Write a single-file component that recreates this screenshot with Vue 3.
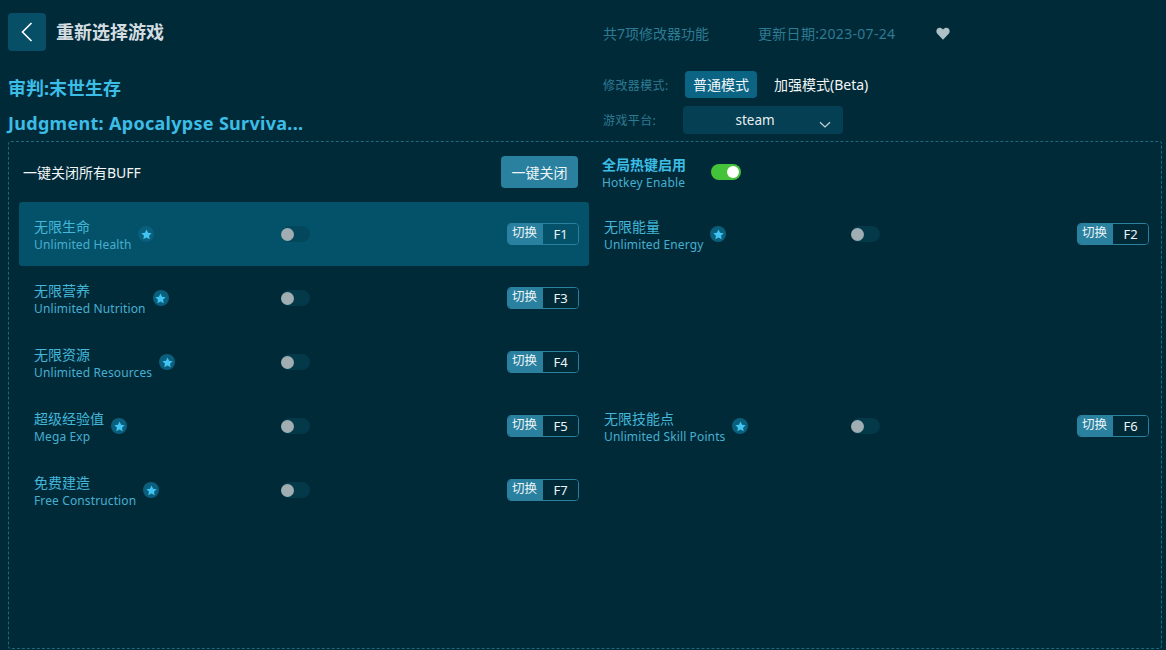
<script setup>
const cheats = [
  { zh: '无限生命', en: 'Unlimited Health', key: 'F1', active: true },
  { zh: '无限能量', en: 'Unlimited Energy', key: 'F2' },
  { zh: '无限营养', en: 'Unlimited Nutrition', key: 'F3' },
  null,
  { zh: '无限资源', en: 'Unlimited Resources', key: 'F4' },
  null,
  { zh: '超级经验值', en: 'Mega Exp', key: 'F5' },
  { zh: '无限技能点', en: 'Unlimited Skill Points', key: 'F6' },
  { zh: '免费建造', en: 'Free Construction', key: 'F7' },
]
</script>

<template>
  <div class="page">
    <header class="head">
      <div class="head-left">
        <div class="back-row">
          <button class="back">
            <svg width="12" height="20" viewBox="0 0 12 20" fill="none">
              <path d="M10.5 1 1.500 10l9 9" stroke="#fff" stroke-width="1.6" />
            </svg>
          </button>
          <span class="back-title">重新选择游戏</span>
        </div>
        <div class="game-zh">审判:末世生存</div>
        <div class="game-en">Judgment: Apocalypse Surviva...</div>
      </div>
      <div class="head-right">
        <div class="info-row">
          <span class="count">共7项修改器功能</span>
          <span class="date">更新日期:2023-07-24</span>
          <svg class="heart" width="14" height="13" viewBox="0 0 24 22">
            <path fill="#aebfc6" d="M12 21.500 2.600 11.800C-.2 8.900.1 4.900 2.500 2.600 5 .3 9 .6 12 4c3-3.400 7-3.700 9.500-1.400 2.400 2.300 2.700 6.300-.1 9.200z" />
          </svg>
        </div>
        <div class="mode-row">
          <span class="label">修改器模式:</span>
          <span class="mode on">普通模式</span>
          <span class="mode beta">加强模式(Beta)</span>
        </div>
        <div class="platform-row">
          <span class="label">游戏平台:</span>
          <div class="select">
            <span>steam</span>
            <svg class="caret" width="12" height="7" viewBox="0 0 12 7" fill="none">
              <path d="M1 1.200 6 6l5-4.800" stroke="#c4d4da" stroke-width="1.200" />
            </svg>
          </div>
        </div>
      </div>
    </header>

    <section class="panel">
      <div class="panel-top">
        <div class="close-all">
          <span>一键关闭所有BUFF</span>
          <button class="close-btn">一键关闭</button>
        </div>
        <div class="hotkey">
          <div class="hotkey-text">
            <div class="hotkey-zh">全局热键启用</div>
            <div class="hotkey-en">Hotkey Enable</div>
          </div>
          <span class="switch"><i></i></span>
        </div>
      </div>
      <div class="grid">
        <template v-for="(c, i) in cheats" :key="i">
          <div v-if="c" class="item" :class="{ active: c.active }">
            <div class="name">
              <div class="names">
                <div class="zh">{{ c.zh }}</div>
                <div class="en">{{ c.en }}</div>
              </div>
              <span class="star">
                <svg width="11" height="11" viewBox="0 0 24 24">
                  <path fill="#42c4f2" d="m12 1 3.400 7.200 7.800 1-5.700 5.400 1.500 7.800-7-3.800-7 3.800 1.500-7.800L.8 9.200l7.800-1z" />
                </svg>
              </span>
            </div>
            <span class="toggle"><i></i></span>
            <div class="keybind">
              <span class="tag">切换</span>
              <span class="key">{{ c.key }}</span>
            </div>
          </div>
          <div v-else></div>
        </template>
      </div>
    </section>
  </div>
</template>

<style>
html, body {
  margin: 0;
  background: #012a38;
}
</style>

<style scoped>
.page {
  height: 650px;
  box-sizing: border-box;
  padding: 0 4px 1px 8px;
  display: flex;
  flex-direction: column;
  overflow: hidden;
  background: #012a38;
  font-family: "Noto Sans", "Noto Sans CJK SC", sans-serif;
}

.head {
  height: 141px;
  display: flex;
  flex: none;
}

.head-left {
  width: 595px;
  padding-top: 13px;
}

.back-row {
  display: flex;
  align-items: center;
  height: 38px;
  gap: 10px;
}

.back {
  width: 38px;
  height: 38px;
  padding: 0;
  border: 0;
  border-radius: 4px;
  background: #064f67;
  display: flex;
  align-items: center;
  justify-content: center;
}

.back-title {
  font-size: 18px;
  font-weight: 700;
  color: #d3dde0;
  line-height: 38px;
}

.game-zh,
.game-en {
  font-size: 18px;
  font-weight: 700;
  color: #3cbde6;
  line-height: 24px;
}

.game-zh {
  margin-top: 25px;
}

.game-en {
  margin-top: 11px;
  letter-spacing: .3px;
}

.head-right {
  flex: 1;
}

.info-row {
  display: flex;
  align-items: center;
  height: 20px;
  margin-top: 23px;
  font-size: 14px;
  color: #2d7a93;
}

.count {
  width: 155px;
}

.date {
  width: 178px;
  letter-spacing: .3px;
}

.mode-row,
.platform-row {
  display: flex;
  align-items: center;
}

.mode-row {
  margin-top: 28px;
  height: 27px;
}

.platform-row {
  margin-top: 8px;
  height: 28px;
}

.label {
  width: 82px;
  flex: none;
  font-size: 12px;
  letter-spacing: .4px;
  color: #2d7a93;
}

.platform-row .label {
  width: 80px;
}

.mode {
  padding: 0 8px;
  height: 27px;
  line-height: 27px;
  border-radius: 4px;
  font-size: 14px;
  color: #f1f6f7;
}

.mode.on {
  background: #0b6484;
}

.mode.beta {
  margin-left: 9px;
}

.select {
  position: relative;
  width: 160px;
  height: 28px;
  border-radius: 4px;
  background: #053f53;
  color: #e8eff1;
  font-size: 13.500px;
  line-height: 28px;
  text-align: center;
  box-sizing: border-box;
  padding-right: 16px;
}

.caret {
  position: absolute;
  right: 12px;
  top: 15px;
}

.panel {
  flex: 1;
  border: 1px dashed #1d6a7d;
  border-radius: 3px;
  padding: 0 1px 0 10px;
}

.panel-top {
  height: 60px;
  display: grid;
  grid-template-columns: 570px 1fr;
}

.close-all {
  display: flex;
  align-items: center;
  justify-content: space-between;
  padding: 0 11px 0 4px;
  height: 32px;
  margin-top: 14px;
  font-size: 14px;
  color: #f2f6f7;
}

.close-btn {
  width: 77px;
  height: 32px;
  padding: 0;
  border: 0;
  border-radius: 4px;
  background: #29809f;
  color: #eef5f7;
  font: inherit;
}

.hotkey {
  display: flex;
  align-items: center;
  margin-top: 14px;
  height: 36px;
  padding-left: 13px;
}

.hotkey-text {
  width: 109px;
}

.hotkey-zh {
  font-size: 14px;
  font-weight: 700;
  color: #3cbde6;
  line-height: 18px;
}

.hotkey-en {
  font-size: 12px;
  letter-spacing: .2px;
  color: #46afd0;
  line-height: 18px;
}

.switch {
  position: relative;
  width: 30px;
  height: 16px;
  border-radius: 8px;
  background: #44c23a;
  margin-bottom: 4px;
}

.switch i {
  position: absolute;
  right: 2px;
  top: 2px;
  width: 12px;
  height: 12px;
  border-radius: 50%;
  background: #fff;
}

.grid {
  display: grid;
  grid-template-columns: 570px 570px;
  grid-auto-rows: 64px;
}

.item {
  display: flex;
  align-items: center;
  padding: 0 10px 0 15px;
  border-radius: 3px;
}

.item.active {
  background: #045269;
}

.name {
  width: 247px;
  flex: none;
  display: flex;
  align-items: center;
  gap: 7px;
}

.names {
  padding-top: 3px;
}

.zh {
  font-size: 14px;
  line-height: 18px;
  color: #43b7d9;
}

.en {
  font-size: 12px;
  letter-spacing: .12px;
  line-height: 16px;
  margin-top: 1px;
  color: #46afd0;
}

.star {
  width: 16px;
  height: 16px;
  border-radius: 50%;
  background: #0a5f7d;
  display: flex;
  align-items: center;
  justify-content: center;
}

.toggle {
  position: relative;
  width: 29px;
  height: 16px;
  border-radius: 8px;
  background: #033948;
}

.item.active .toggle {
  background: #03475c;
}

.toggle i {
  position: absolute;
  left: 0;
  top: 2px;
  width: 13px;
  height: 13px;
  border-radius: 50%;
  background: #a0adb3;
}

.keybind {
  margin-left: auto;
  width: 72px;
  height: 22px;
  box-sizing: border-box;
  display: flex;
  border: 1px solid #29809f;
  border-radius: 4px;
  overflow: hidden;
  font-size: 12.500px;
}

.tag {
  width: 35px;
  box-sizing: border-box;
  padding-left: 4px;
  background: #29809f;
  color: #edf5f7;
  line-height: 18px;
}

.key {
  flex: 1;
  background: #012a38;
  color: #eef5f7;
  text-align: center;
  font-size: 13px;
  line-height: 21px;
}

.item.active .key {
  background: #045269;
}
</style>
